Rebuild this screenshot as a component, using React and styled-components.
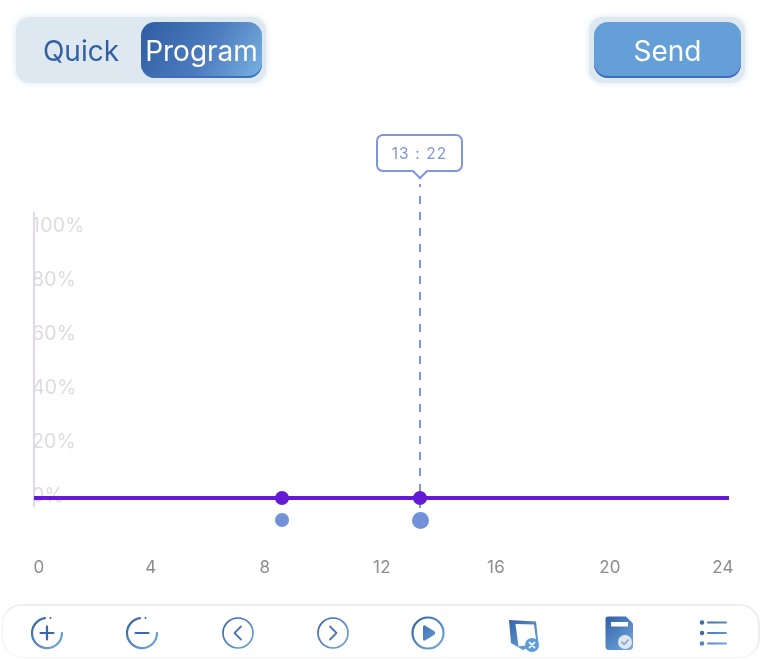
import React from "react";
import styled, { createGlobalStyle } from "styled-components";

const Global = createGlobalStyle`
  html, body { margin: 0; padding: 0; background: #fff; }
  * { box-sizing: border-box; }
`;

const Page = styled.div`
  width: 768px;
  height: 660px;
  display: flex;
  flex-direction: column;
  overflow: hidden;
  background: #fff;
  font-family: Inter, "Liberation Sans", sans-serif;
  filter: blur(0.4px);
`;

const Header = styled.header`
  display: flex;
  justify-content: space-between;
  padding: 17px 23px 0 16px;
  height: 83px;
  flex: none;
`;

const Toggle = styled.div`
  width: ${(p) => p.$width}px;
  height: 66px;
  padding: 5px;
  display: flex;
  justify-content: flex-end;
  border-radius: 14px;
  background: #dde8f1;
  box-shadow: 0 0 6px rgba(170, 200, 225, 0.45);
  padding-right: ${(p) => p.$right}px;
`;

const TabPlain = styled.div`
  flex: 1;
  display: flex;
  align-items: center;
  justify-content: center;
  font-size: 28px;
  color: #33609f;
  padding-top: 1px;
`;

const TabActive = styled.div`
  width: ${(p) => p.$width}px;
  height: 56px;
  display: flex;
  align-items: center;
  justify-content: center;
  font-size: 28px;
  color: #fff;
  padding-top: 1px;
  border-radius: 14px;
  background: ${(p) => p.$bg};
  box-shadow: inset 0 -2px 0 #416fb6;
`;

const Chart = styled.div`
  position: relative;
  flex: none;
  height: 521px;
`;

const YAxis = styled.div`
  position: absolute;
  left: 33px;
  top: 129px;
  width: 2px;
  height: 295px;
  background: #e3d6f0;
`;

const YLabel = styled.div`
  position: absolute;
  left: 32px;
  font-size: 19.5px;
  line-height: 24px;
  letter-spacing: 0.2px;
  color: #dcdce0;
`;

const Line = styled.div`
  position: absolute;
  left: 34px;
  top: 413px;
  width: 695px;
  height: 4px;
  background: #651ad6;
`;

const Dash = styled.div`
  position: absolute;
  left: 419px;
  top: 113px;
  width: 2px;
  height: 314px;
  background: repeating-linear-gradient(to bottom, #7f96d8 0 8px, transparent 8px 16px);

  &::before {
    content: "";
    position: absolute;
    left: 0;
    top: -12px;
    width: 2px;
    height: 3px;
    background: #7f96d8;
  }
`;

const Dot = styled.div`
  position: absolute;
  left: ${(p) => p.$x - p.$r}px;
  top: ${(p) => p.$y - p.$r}px;
  width: ${(p) => p.$r * 2}px;
  height: ${(p) => p.$r * 2}px;
  border-radius: 50%;
  background: ${(p) => p.$color};
`;

const Bubble = styled.div`
  position: absolute;
  left: 376px;
  top: 51px;
  width: 87px;
  height: 38px;
  display: flex;
  align-items: center;
  justify-content: center;
  border: 2.5px solid #7d97d9;
  border-radius: 7px;
  background: #fff;
  font-size: 15.5px;
  letter-spacing: 1.1px;
  color: #7d97d9;

  &::after {
    content: "";
    position: absolute;
    left: 36px;
    bottom: -7px;
    width: 10px;
    height: 10px;
    background: #fff;
    border-right: 2.5px solid #7d97d9;
    border-bottom: 2.5px solid #7d97d9;
    transform: rotate(45deg);
  }
`;

const XLabel = styled.div`
  position: absolute;
  top: 472px;
  left: ${(p) => p.$x - 30}px;
  width: 60px;
  text-align: center;
  font-size: 17px;
  line-height: 24px;
  letter-spacing: 0.3px;
  color: #8c8c8c;
`;

const Toolbar = styled.nav`
  flex: none;
  height: 54px;
  margin: 0 8px 2px 2px;
  padding: 2px 24px 0 24px;
  display: flex;
  align-items: center;
  justify-content: space-between;
  border-top: 2px solid #eeeeee;
  border-left: 1px solid #f1f1f1;
  border-right: 2px solid #eeeeee;
  border-bottom: 1px solid #f5f5f5;
  border-radius: 20px;
`;

const IconSlot = styled.svg`
  width: 40px;
  height: 40px;
  flex: none;
  display: block;
  overflow: visible;
`;

const G = "url(#iconGrad)";

const Icon = ({ children }) => (
  <IconSlot viewBox="0 0 40 40" fill="none">{children}</IconSlot>
);

const hours = [[39, 0], [151, 4], [265, 8], [382, 12], [496, 16], [610, 20], [723, 24]];
const percents = ["100%", "80%", "60%", "40%", "20%", "0%"];

export default function App() {
  return (
    <Page>
      <Global />
      <svg width="0" height="0" style={{ position: "absolute" }}>
        <defs>
          <linearGradient id="iconGrad" gradientUnits="userSpaceOnUse" x1="4" y1="4" x2="36" y2="36">
            <stop offset="0" stopColor="#2f5ca3" />
            <stop offset="1" stopColor="#74aee0" />
          </linearGradient>
        </defs>
      </svg>
      <Header>
        <Toggle $width={250} $right={4}>
          <TabPlain>Quick</TabPlain>
          <TabActive $width={121} $bg="linear-gradient(120deg, #2f5ca3 0%, #4d7dbf 55%, #78b2e2 100%)">Program</TabActive>
        </Toggle>
        <Toggle $width={156} $right={4}>
          <TabActive $width={147} $bg="#659fd8">Send</TabActive>
        </Toggle>
      </Header>
      <Chart>
        <YAxis />
        {percents.map((t, i) => (
          <YLabel key={t} style={{ top: 130 + i * 54 }}>{t}</YLabel>
        ))}
        <Dash />
        <Line />
        <Dot $x={282} $y={415} $r={7} $color="#651ad6" />
        <Dot $x={420} $y={415} $r={7} $color="#651ad6" />
        <Dot $x={282} $y={437} $r={7} $color="#7191d9" />
        <Dot $x={420} $y={437} $r={8.5} $color="#7191d9" />
        <Bubble>13 : 22</Bubble>
        {hours.map(([x, h]) => (
          <XLabel key={h} $x={x}>{h}</XLabel>
        ))}
      </Chart>
      <Toolbar>
        <Icon>
          <path d="M18 5.2 A15 15 0 1 0 35 20" stroke={G} strokeWidth="2.2" strokeLinecap="round" />
          <circle cx="23.5" cy="5" r="1" fill="#3b68ab" />
          <path d="M13.5 20h13M20 13.5v13" stroke="#3b68ab" strokeWidth="2.2" strokeLinecap="round" />
        </Icon>
        <Icon>
          <path d="M18 5.2 A15 15 0 1 0 35 20" stroke={G} strokeWidth="2.2" strokeLinecap="round" />
          <circle cx="23.5" cy="5" r="1" fill="#3b68ab" />
          <path d="M13.5 20h13" stroke="#3b68ab" strokeWidth="2.2" strokeLinecap="round" />
        </Icon>
        <Icon>
          <circle cx="20" cy="20" r="15" stroke={G} strokeWidth="1.7" />
          <path d="M23 13.5 L16.5 20 L23 26.5" stroke="#4a78b8" strokeWidth="1.8" strokeLinecap="round" strokeLinejoin="round" />
        </Icon>
        <Icon>
          <circle cx="20" cy="20" r="15" stroke={G} strokeWidth="1.7" />
          <path d="M17 13.5 L23.5 20 L17 26.5" stroke="#4a78b8" strokeWidth="1.8" strokeLinecap="round" strokeLinejoin="round" />
        </Icon>
        <Icon>
          <circle cx="20" cy="20" r="15.5" stroke={G} strokeWidth="2.2" />
          <path d="M15 14 Q15 11.5 17.5 12.8 L26 18 Q28.5 20 26 22 L17.5 27.2 Q15 28.5 15 26 Z" fill={G} />
        </Icon>
        <Icon>
          <path d="M6 7 L33 8.5 L35.5 30 L20 37 L8 30 Z" fill={G} />
          <path d="M12.5 11 L31 11.5 L33.5 31 L15.5 33.5 Z" fill="#fff" />
          <circle cx="29" cy="32" r="7" fill="#5f9bd6" />
          <path d="M26.5 29.5l5 5M31.5 29.5l-5 5" stroke="#eaf1f8" strokeWidth="1.8" strokeLinecap="round" />
        </Icon>
        <Icon>
          <path d="M9 3.5 H27 L34 10.5 V33 Q34 37 30 37 H10 Q6.5 37 6.5 33 V6 Q6.5 3.5 9 3.5 Z" fill={G} />
          <rect x="12" y="9" width="17" height="4.5" fill="#fff" />
          <circle cx="26" cy="29" r="7" fill="#dfe6ee" />
          <path d="M22.8 29l2.4 2.4 4-4.4" stroke="#8aa6cd" strokeWidth="1.6" strokeLinecap="round" strokeLinejoin="round" />
        </Icon>
        <Icon>
          <circle cx="8" cy="9.5" r="2.2" fill="#3b68ab" />
          <circle cx="8" cy="20" r="2.2" fill="#3b68ab" />
          <circle cx="8" cy="30.5" r="2.2" fill="#4f82c3" />
          <path d="M14 9.5h18M14 20h18M14 30.5h18" stroke={G} strokeWidth="2" strokeLinecap="round" />
        </Icon>
      </Toolbar>
    </Page>
  );
}
